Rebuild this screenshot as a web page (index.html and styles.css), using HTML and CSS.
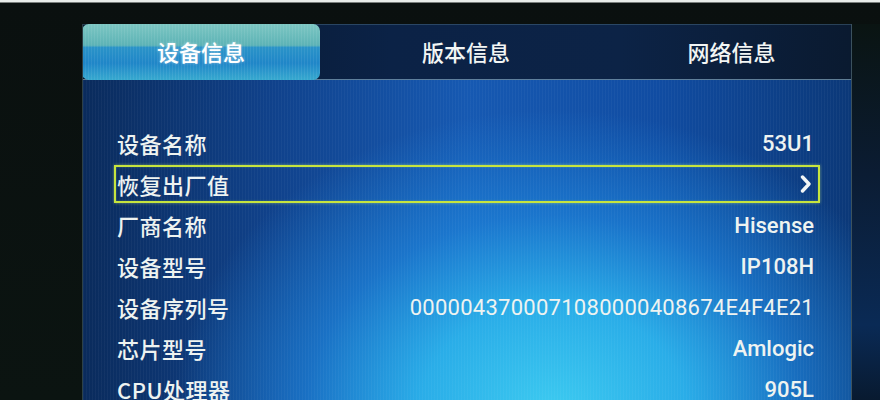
FILE: index.html
```html
<!DOCTYPE html>
<html lang="zh">
<head>
<meta charset="utf-8">
<link rel="stylesheet" href="styles.css">
</head>
<body>
<div class="screen">
  <div class="panel">
    <div class="tabs">
      <div class="tab active">设备信息</div>
      <div class="tab">版本信息</div>
      <div class="tab">网络信息</div>
    </div>
    <div class="content">
      <div class="list">
        <div class="row"><span class="label">设备名称</span><span class="value">53U1</span></div>
        <div class="row selected"><span class="label">恢复出厂值</span><svg class="chev" width="12" height="18" viewBox="0 0 12 18"><polyline points="2.5,2 9,9 2.5,16" fill="none" stroke="#f2f6f6" stroke-width="3.4" stroke-linecap="round" stroke-linejoin="round"/></svg></div>
        <div class="row"><span class="label">厂商名称</span><span class="value">Hisense</span></div>
        <div class="row"><span class="label">设备型号</span><span class="value">IP108H</span></div>
        <div class="row"><span class="label">设备序列号</span><span class="value serial">0000043700071080000408674E4F4E21</span></div>
        <div class="row"><span class="label">芯片型号</span><span class="value">Amlogic</span></div>
        <div class="row"><span class="label">CPU处理器</span><span class="value">905L</span></div>
      </div>
    </div>
  </div>
  <div class="edge"></div>
</div>
</body>
</html>
```

FILE: styles.css
```css
html, body {
  margin: 0;
  padding: 0;
}
body {
  width: 880px;
  height: 400px;
  overflow: hidden;
  background: linear-gradient(180deg, #e8ecea 0, #e8ecea 2px, #0a100f 3px, #0b1411 100%);
  font-family: "Noto Sans CJK SC", "Noto Sans", sans-serif;
  color: #eef3f2;
}
.screen {
  display: flex;
  height: 400px;
  padding: 24px 0 0 82px;
  box-sizing: border-box;
  overflow: hidden;
}
.panel {
  width: 770px;
  display: flex;
  flex-direction: column;
  border-left: 1px solid rgba(110,150,170,0.35);
  border-right: 1px solid rgba(120,160,190,0.45);
  box-sizing: border-box;
  overflow: hidden;
}
.tabs {
  flex-shrink: 0;
  display: grid;
  grid-template-columns: 237px 1fr 239px;
  height: 56px;
  border-top: 1px solid rgba(100,140,160,0.35);
  border-bottom: 1px solid rgba(150,190,215,0.6);
  background: linear-gradient(90deg, #07172c 0%, #0b2246 40%, #0c2346 70%, #0a1a30 100%);
  box-sizing: border-box;
}
.tab {
  display: flex;
  align-items: center;
  justify-content: center;
  font-size: 22px;
  font-weight: 500;
  color: #f2f5f4;
  padding-bottom: 2px;
}
.tab.active {
  margin: -1px 0 -1px -1px;
  border-radius: 7px;
  background:
    repeating-linear-gradient(90deg, rgba(255,255,255,0.07) 0 1px, transparent 1px 3px),
    linear-gradient(180deg, #7cc6c2 0%, #5db3b6 38%, #2a93c8 42%, #1f86c8 70%, #37a9cf 100%);
  color: #ffffff;
  text-shadow: 0 0 3px rgba(255,255,255,0.5);
}
.content {
  flex: 1 0 auto;
  padding: 44px 31px 0;
  background:
    repeating-linear-gradient(90deg, rgba(255,255,255,0.035) 0 1px, transparent 1px 3px),
    radial-gradient(ellipse 380px 300px at 470px 330px, #3ccaf0 0%, #2aade8 35%, rgba(30,135,222,0.65) 65%, rgba(20,90,190,0) 100%),
    linear-gradient(90deg, #0a2b5c 0%, #10428c 25%, #1659b2 50%, #104ca2 75%, #0b3878 100%);
}
.list {
  display: flex;
  flex-direction: column;
  gap: 3px;
}
.row {
  height: 38px;
  display: flex;
  align-items: center;
  justify-content: space-between;
  padding: 0 4px 0 1px;
  border: 2px solid transparent;
  box-sizing: border-box;
}
.row.selected {
  border-color: #c6e43e;
  box-shadow: 0 0 3px rgba(220,255,120,0.45), inset 0 0 2px rgba(220,255,120,0.3);
}
.label {
  font-size: 22px;
  font-weight: 500;
  letter-spacing: 0.5px;
  color: #eef3f1;
}
.value {
  font-family: Roboto, "Liberation Sans", sans-serif;
  font-size: 22px;
  font-weight: 500;
  color: #eef3f1;
}
.serial {
  font-weight: 400;
  letter-spacing: 0.27px;
}
.chev {
  margin-right: 2px;
}
.edge {
  flex: 1;
  background: linear-gradient(180deg, #0a1412 0%, #0b1c33 40%, #0a2a55 80%, #081a30 100%);
}
```
